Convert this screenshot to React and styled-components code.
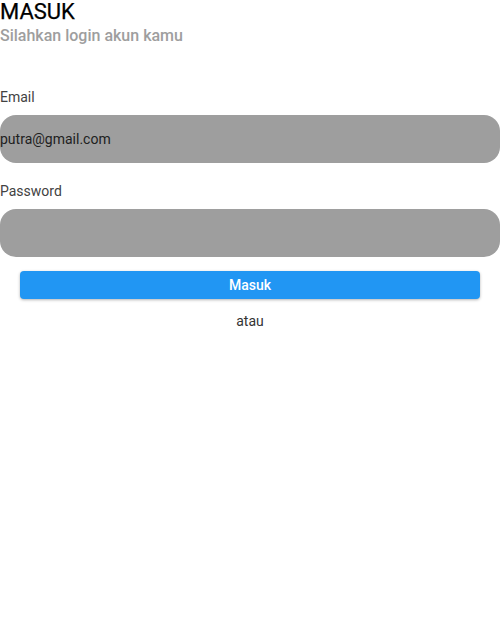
import React from "react";
import styled, { createGlobalStyle } from "styled-components";

const Global = createGlobalStyle`
  html, body { margin: 0; padding: 0; background: #fff; }
  body { font-family: Roboto, "Noto Sans", sans-serif; }
  * { box-sizing: border-box; }
`;

const Page = styled.div`
  width: 500px;
  display: flex;
  flex-direction: column;
`;

const Title = styled.h1`
  margin: 0;
  font-size: 22px;
  font-weight: 400;
  line-height: 24px;
  color: #000;
  -webkit-text-stroke: 0.25px #000;
`;

const Subtitle = styled.div`
  font-size: 16px;
  font-weight: 500;
  line-height: 22px;
  margin-top: 1px;
  color: #9e9e9e;
`;

const Form = styled.div`
  margin-top: 40px;
  display: flex;
  flex-direction: column;
`;

const Label = styled.div`
  font-size: 14px;
  line-height: 20px;
  color: #424242;
  margin-bottom: ${(p) => p.$gap}px;
`;

const Field = styled.div`
  height: 48px;
  border-radius: 16px;
  background: #9e9e9e;
  display: flex;
  align-items: center;
  font-size: 14px;
  color: #212121;
  margin-bottom: ${(p) => p.$gap}px;
`;

const ButtonRow = styled.div`
  padding: 0 20px;
`;

const Button = styled.button`
  width: 100%;
  height: 28px;
  border: none;
  border-radius: 4px;
  background: #2196f3;
  color: #fff;
  font-family: Roboto, sans-serif;
  font-size: 14px;
  font-weight: 500;
  box-shadow: 0 1px 3px rgba(0, 0, 0, 0.3);
  padding: 0;
`;

const Or = styled.div`
  text-align: center;
  margin-top: 12px;
  font-size: 14px;
  line-height: 20px;
  color: #333;
`;

export default function App() {
  return (
    <Page>
      <Global />
      <Title>MASUK</Title>
      <Subtitle>Silahkan login akun kamu</Subtitle>
      <Form>
        <Label $gap={8}>Email</Label>
        <Field $gap={18}>putra@gmail.com</Field>
        <Label $gap={8}>Password</Label>
        <Field $gap={14} />
        <ButtonRow>
          <Button>Masuk</Button>
        </ButtonRow>
        <Or>atau</Or>
      </Form>
    </Page>
  );
}
